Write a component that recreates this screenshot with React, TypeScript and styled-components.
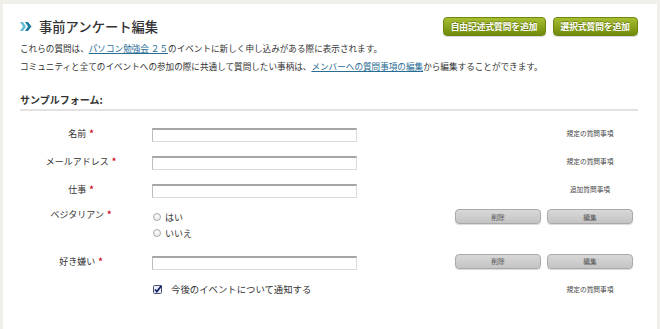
import React from "react";
import styled, { createGlobalStyle } from "styled-components";

const GlobalStyle = createGlobalStyle`
  html, body { margin: 0; padding: 0; background: #f1efea; }
  body { font-family: "Noto Sans CJK JP", "Noto Sans", sans-serif; color: #333; }
  * { box-sizing: border-box; }
`;

const Page = styled.div`
  padding: 4px 3px 0 3px;
  height: 329px;
`;

const Panel = styled.div`
  background: #fff;
  height: 100%;
  padding: 13px 19px 0 17px;
`;

const Header = styled.div`
  display: flex;
  align-items: center;
  justify-content: space-between;
  height: 19px;
`;

const TitleWrap = styled.div`
  display: flex;
  align-items: center;
  gap: 7px;
`;

const Title = styled.h1`
  margin: 0;
  font-size: 13.3px;
  line-height: 19px;
  font-weight: 500;
  color: #333;
`;

const HeaderActions = styled.div`
  display: flex;
  gap: 7px;
`;

const GreenButton = styled.button`
  height: 19px;
  padding: 0 7px;
  font-family: inherit;
  font-size: 8.7px;
  font-weight: bold;
  color: #fff;
  border-radius: 4px;
  border: 1px solid #6d8711;
  background: linear-gradient(#a7be30, #6f8a0b);
  text-shadow: 0 -1px 0 rgba(0, 0, 0, 0.3);
  box-shadow: 0 1px 1px rgba(0, 0, 0, 0.15);
  white-space: nowrap;
`;

const Description = styled.div`
  margin-top: 3px;
  font-size: 8.6px;
  line-height: 18px;
  color: #333;
`;

const Link = styled.a`
  color: #2a6d94;
  text-decoration: underline;
`;

const SectionTitle = styled.h2`
  margin: 18px 0 0;
  font-size: 10px;
  line-height: 14px;
  font-weight: bold;
  color: #333;
  padding-bottom: 2px;
  border-bottom: 2px solid #e6e1e1;
`;

const Form = styled.div`
  padding-top: 8px;
`;

const Row = styled.div<{ $tall?: boolean }>`
  display: grid;
  grid-template-columns: 132px 303px 92px 86px;
  min-height: 28px;
  align-items: ${(p) => (p.$tall ? "start" : "center")};
  padding: ${(p) => (p.$tall ? "6px 0" : "0")};
`;

const Label = styled.div`
  padding-right: 10px;
  text-align: center;
  font-size: 9px;
  line-height: 11px;
  color: #333;
`;

const Req = styled.span`
  color: #d0021b;
  font-weight: bold;
  margin-left: 3px;
`;

const TextInput = styled.input`
  width: 205px;
  height: 14px;
  margin: 0;
  padding: 0;
  border: 1px solid #dadada;
  border-top: 2px solid #a6a6a6;
  border-left-color: #bdbdbd;
  background: #fff;
`;

const GrayButton = styled.button`
  width: 86px;
  height: 15px;
  padding: 0;
  font-family: inherit;
  font-size: 6.7px;
  color: #555;
  border-radius: 4px;
  border: 1px solid #a9a9a9;
  background: linear-gradient(#d8d8d8, #c4c4c4);
  box-shadow: 0 1px 1px rgba(0, 0, 0, 0.15);
`;

const Note = styled.div`
  text-align: center;
  font-size: 6.7px;
  color: #444;
`;

const RadioGroup = styled.div`
  display: flex;
  flex-direction: column;
`;

const RadioOption = styled.label`
  display: flex;
  align-items: center;
  gap: 4px;
  height: 16px;
  padding-left: 1px;
  font-size: 9px;
  color: #333;
`;

const RadioDot = styled.span`
  width: 8px;
  height: 8px;
  border-radius: 50%;
  border: 1px solid #aaa;
  background: radial-gradient(circle at 50% 30%, #fff, #e6e6e6);
`;

const CheckOption = styled.label`
  display: flex;
  align-items: center;
  gap: 9px;
  padding-left: 1px;
  font-size: 9.4px;
  color: #333;
`;

const Chevrons = () => (
  <svg width="12" height="9" viewBox="0 0 12 9">
    <polygon points="0,0 3,0 6,4.5 3,9 0,9 3,4.5" fill="#62bcd6" />
    <polygon points="5,0 8,0 11.5,4.5 8,9 5,9 8,4.5" fill="#1d7aa2" />
  </svg>
);

const CheckBox = () => (
  <svg width="9" height="9" viewBox="0 0 9 9">
    <rect x="0.5" y="0.5" width="8" height="8" rx="1" fill="#e9eef8" stroke="#4a5068" />
    <path d="M2 4.5 L3.8 6.6 L8.6 0.6" fill="none" stroke="#16236a" strokeWidth="1.7" />
  </svg>
);

type FieldRow = { label: string; note: string };

const textRows: FieldRow[] = [
  { label: "名前", note: "規定の質問事項" },
  { label: "メールアドレス", note: "規定の質問事項" },
  { label: "仕事", note: "追加質問事項" },
];

export default function App() {
  return (
    <>
      <GlobalStyle />
      <Page>
        <Panel>
          <Header>
            <TitleWrap>
              <Chevrons />
              <Title>事前アンケート編集</Title>
            </TitleWrap>
            <HeaderActions>
              <GreenButton>自由記述式質問を追加</GreenButton>
              <GreenButton>選択式質問を追加</GreenButton>
            </HeaderActions>
          </Header>
          <Description>
            <div>
              これらの質問は、<Link href="#">パソコン勉強会 ２５</Link>のイベントに新しく申し込みがある際に表示されます。
            </div>
            <div>
              コミュニティと全てのイベントへの参加の際に共通して質問したい事柄は、
              <Link href="#">メンバーへの質問事項の編集</Link>から編集することができます。
            </div>
          </Description>
          <SectionTitle>サンプルフォーム:</SectionTitle>
          <Form>
            {textRows.map((r) => (
              <Row key={r.label}>
                <Label>
                  {r.label}
                  <Req>*</Req>
                </Label>
                <div>
                  <TextInput type="text" />
                </div>
                <div />
                <Note>{r.note}</Note>
              </Row>
            ))}
            <Row $tall>
              <Label>
                ベジタリアン<Req>*</Req>
              </Label>
              <RadioGroup>
                <RadioOption>
                  <RadioDot />
                  はい
                </RadioOption>
                <RadioOption>
                  <RadioDot />
                  いいえ
                </RadioOption>
              </RadioGroup>
              <GrayButton>削除</GrayButton>
              <GrayButton>編集</GrayButton>
            </Row>
            <Row>
              <Label>
                好き嫌い<Req>*</Req>
              </Label>
              <div>
                <TextInput type="text" />
              </div>
              <GrayButton>削除</GrayButton>
              <GrayButton>編集</GrayButton>
            </Row>
            <Row>
              <div />
              <CheckOption>
                <CheckBox />
                今後のイベントについて通知する
              </CheckOption>
              <div />
              <Note>規定の質問事項</Note>
            </Row>
          </Form>
        </Panel>
      </Page>
    </>
  );
}
